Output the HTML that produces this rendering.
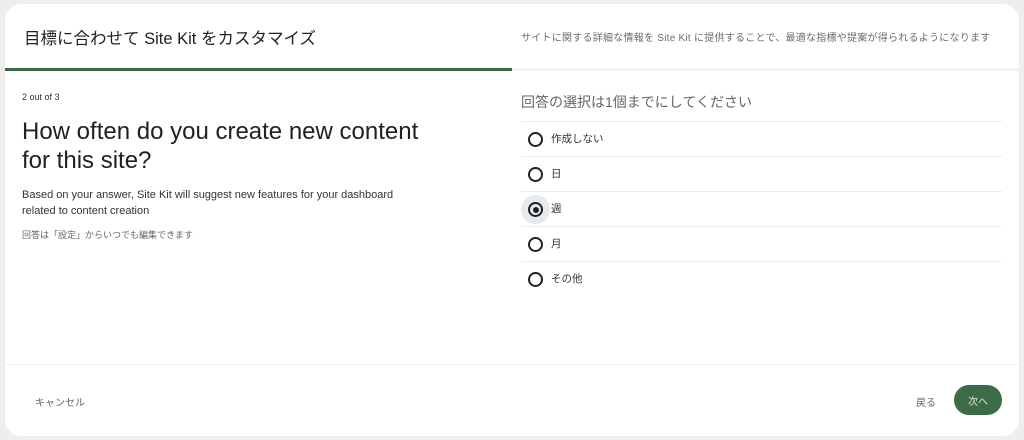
<!DOCTYPE html>
<html><head><meta charset="utf-8"><style>
*{margin:0;padding:0;box-sizing:border-box}
body{width:1024px;height:440px;background:#eeeeee;font-family:"Liberation Sans","Noto Sans CJK JP",sans-serif;color:#202124;position:relative;overflow:hidden}
.card{position:absolute;left:5px;top:4px;width:1014px;height:432px;background:#fff;border-radius:16px;overflow:hidden}
.abs{position:absolute;white-space:nowrap}
.row{position:absolute;left:516px;width:481px;height:35px;border-top:1px solid #ececec}
.radio{position:absolute;left:7px;top:10px;width:15px;height:15px;border:2px solid #202124;border-radius:50%}
.lbl{position:absolute;left:30px;top:9px;font-size:10.5px;color:#333}
</style></head><body>
<div class="card">
<div class="abs" style="left:19px;top:21px;font-size:16.5px;color:#202124">目標に合わせて Site Kit をカスタマイズ</div>
<div class="abs" style="left:516px;top:25px;font-size:10px;letter-spacing:0.25px;color:#6b6b6b">サイトに関する詳細な情報を Site Kit に提供することで、最適な指標や提案が得られるようになります</div>
<div class="abs" style="left:0;top:64px;width:1014px;height:3px;background:#f1f3f8"></div>
<div class="abs" style="left:0;top:64px;width:507px;height:3px;background:#3d6b47"></div>
<div class="abs" style="left:17px;top:88px;font-size:9px;color:#333">2 out of 3</div>
<div class="abs" style="left:17px;top:113px;font-size:24px;line-height:29px;color:#202124">How often do you create new content<br>for this site?</div>
<div class="abs" style="left:17px;top:183px;font-size:11px;line-height:16px;color:#333">Based on your answer, Site Kit will suggest new features for your dashboard<br>related to content creation</div>
<div class="abs" style="left:17px;top:224px;font-size:9px;color:#666">回答は「設定」からいつでも編集できます</div>
<div class="abs" style="left:516px;top:88px;font-size:14px;color:#666">回答の選択は1個までにしてください</div>
<div class="row" style="top:117px"><div class="radio"></div><div class="lbl">作成しない</div></div>
<div class="row" style="top:152px"><div class="radio"></div><div class="lbl">日</div></div>
<div class="row" style="top:187px"><div style="position:absolute;left:0px;top:3px;width:29px;height:29px;border-radius:50%;background:#e6e9f0"></div><div class="radio"><div style="position:absolute;left:2.5px;top:2.5px;width:6px;height:6px;border-radius:50%;background:#202124"></div></div><div class="lbl">週</div></div>
<div class="row" style="top:222px"><div class="radio"></div><div class="lbl">月</div></div>
<div class="row" style="top:257px"><div class="radio"></div><div class="lbl">その他</div></div>
<div class="abs" style="left:0;top:360px;width:1014px;height:1px;background:#efefef"></div>
<div class="abs" style="left:30px;top:390px;font-size:10px;color:#666">キャンセル</div>
<div class="abs" style="left:911px;top:390px;font-size:10px;color:#666">戻る</div>
<div class="abs" style="left:949px;top:381px;width:48px;height:30px;border-radius:15px;background:#3d6b47;color:#dfe8df;font-size:10px;display:flex;align-items:center;justify-content:center">次へ</div>
</div>
</body></html>
